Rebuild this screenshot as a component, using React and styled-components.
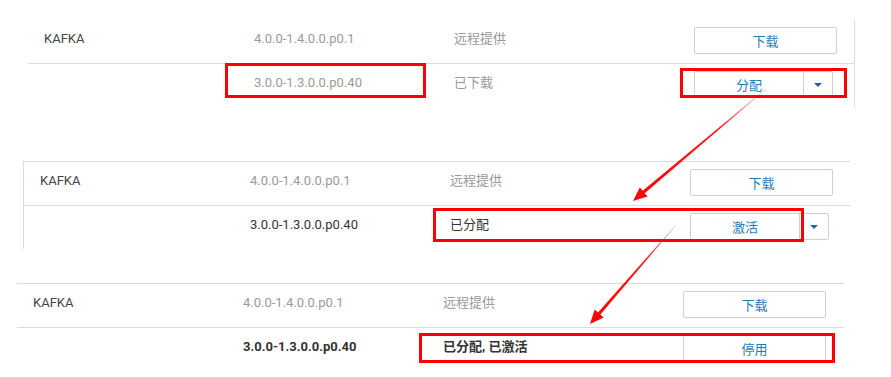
import React from "react";
import styled, { createGlobalStyle } from "styled-components";

const GlobalStyle = createGlobalStyle`
  body {
    margin: 0;
    background: #fff;
    font-family: Roboto, "Noto Sans CJK SC", sans-serif;
    font-size: 13px;
  }
`;

const steps = [
  {
    left: 28,
    top: 0,
    borderTop: false,
    borderLeft: false,
    borderRight: true,
    rows: [
      { name: "KAFKA", version: "4.0.0-1.4.0.0.p0.1", status: "远程提供", action: "下载", tone: "muted" },
      { name: "", version: "3.0.0-1.3.0.0.p0.40", status: "已下载", action: "分配", split: true, tone: "muted" },
    ],
  },
  {
    left: 23,
    top: 54,
    borderTop: true,
    borderLeft: true,
    borderRight: false,
    rows: [
      { name: "KAFKA", version: "4.0.0-1.4.0.0.p0.1", status: "远程提供", action: "下载", tone: "muted" },
      { name: "", version: "3.0.0-1.3.0.0.p0.40", status: "已分配", action: "激活", split: true, tone: "dark" },
    ],
  },
  {
    left: 17,
    top: 34,
    borderTop: true,
    borderLeft: false,
    borderRight: false,
    rows: [
      { name: "KAFKA", version: "4.0.0-1.4.0.0.p0.1", status: "远程提供", action: "下载", tone: "muted" },
      { name: "", version: "3.0.0-1.3.0.0.p0.40", status: "已分配, 已激活", action: "停用", tone: "bold" },
    ],
  },
];

const marks = [
  { x: 226.5, y: 64.5, w: 198, h: 32 },
  { x: 681.5, y: 69.5, w: 164, h: 27 },
  { x: 434.5, y: 209.5, w: 368, h: 31 },
  { x: 420.5, y: 334.5, w: 413, h: 27 },
];

const arrows = [
  { from: [766, 89], to: [633, 201] },
  { from: [676, 225], to: [590, 324] },
];

const Page = styled.div`
  position: relative;
  width: 891px;
  height: 377px;
  padding-top: 20px;
  box-sizing: border-box;
  overflow: hidden;
`;

const Panel = styled.div`
  margin-left: ${(p) => p.$left}px;
  margin-top: ${(p) => p.$top}px;
  width: 827px;
  box-sizing: border-box;
  border-top: ${(p) => (p.$borderTop ? "1px solid #dcdcdc" : "none")};
  border-left: ${(p) => (p.$borderLeft ? "1px solid #dcdcdc" : "none")};
  border-right: ${(p) => (p.$borderRight ? "1px solid #dcdcdc" : "none")};
`;

const Row = styled.div`
  display: grid;
  grid-template-columns: 210px 200px 240px 1fr;
  height: 43px;
  padding-left: 16px;
  border-bottom: 1px solid #dcdcdc;

  &:last-child {
    border-bottom: none;
  }
`;

const Cell = styled.div`
  padding-top: 10px;
  line-height: 17px;
  white-space: nowrap;
  color: ${(p) => (p.$tone === "muted" ? "#9a9a9a" : p.$tone === "name" ? "#444" : "#333")};
  font-weight: ${(p) => (p.$tone === "bold" ? 700 : 400)};
`;

const ActionCell = styled.div`
  padding-top: 7px;
  display: flex;
`;

const Button = styled.button`
  height: 27px;
  width: ${(p) => (p.$split ? "110px" : "143px")};
  padding: 0;
  background: #fff;
  border: 1px solid #cfcfcf;
  border-radius: ${(p) => (p.$split ? "2px 0 0 2px" : "2px")};
  color: #1f7db7;
  font-family: Roboto, "Noto Sans CJK SC", sans-serif;
  font-size: 13px;
  cursor: pointer;
`;

const CaretButton = styled.button`
  height: 27px;
  width: 30px;
  margin-left: -1px;
  padding: 0;
  background: #fff;
  border: 1px solid #cfcfcf;
  border-radius: 0 2px 2px 0;
  display: flex;
  align-items: center;
  justify-content: center;
  cursor: pointer;

  &::after {
    content: "";
    border-left: 4px solid transparent;
    border-right: 4px solid transparent;
    border-top: 4px solid #1c6aa3;
  }
`;

const Overlay = styled.svg`
  position: absolute;
  left: 0;
  top: 0;
  width: 891px;
  height: 377px;
  pointer-events: none;
`;

function arrowPoints(from, to) {
  const dx = to[0] - from[0];
  const dy = to[1] - from[1];
  const len = Math.hypot(dx, dy);
  const ux = dx / len;
  const uy = dy / len;
  const nx = -uy;
  const ny = ux;
  const head = 14;
  const bx = to[0] - ux * head;
  const by = to[1] - uy * head;
  const p = (x, y) => `${x.toFixed(1)},${y.toFixed(1)}`;
  return [
    p(from[0] + nx * 0.3, from[1] + ny * 0.3),
    p(bx + nx * 1.6, by + ny * 1.6),
    p(bx + nx * 6, by + ny * 6),
    p(to[0], to[1]),
    p(bx - nx * 6, by - ny * 6),
    p(bx - nx * 1.6, by - ny * 1.6),
    p(from[0] - nx * 0.3, from[1] - ny * 0.3),
  ].join(" ");
}

const Annotations = () => (
  <Overlay viewBox="0 0 891 377">
    <defs>
      {arrows.map((a, i) => (
        <linearGradient
          key={i}
          id={`fade${i}`}
          gradientUnits="userSpaceOnUse"
          x1={a.from[0]}
          y1={a.from[1]}
          x2={a.to[0]}
          y2={a.to[1]}
        >
          <stop offset="0" stopColor="#ff0000" stopOpacity="0.2" />
          <stop offset="0.35" stopColor="#ff0000" stopOpacity="0.9" />
          <stop offset="1" stopColor="#ff0000" />
        </linearGradient>
      ))}
    </defs>
    {marks.map((m, i) => (
      <rect key={i} x={m.x} y={m.y} width={m.w} height={m.h} fill="none" stroke="#f00" strokeWidth="3" />
    ))}
    {arrows.map((a, i) => (
      <polygon key={i} points={arrowPoints(a.from, a.to)} fill={`url(#fade${i})`} />
    ))}
  </Overlay>
);

const ParcelRow = ({ row }) => (
  <Row>
    <Cell $tone="name">{row.name}</Cell>
    <Cell $tone={row.tone === "muted" && row.name ? "muted" : row.tone}>{row.version}</Cell>
    <Cell $tone={row.tone}>{row.status}</Cell>
    <ActionCell>
      <Button $split={row.split}>{row.action}</Button>
      {row.split && <CaretButton aria-label="更多" />}
    </ActionCell>
  </Row>
);

export default function App() {
  return (
    <>
      <GlobalStyle />
      <Page>
        {steps.map((s, i) => (
          <Panel
            key={i}
            $left={s.left}
            $top={s.top}
            $borderTop={s.borderTop}
            $borderLeft={s.borderLeft}
            $borderRight={s.borderRight}
          >
            {s.rows.map((r, j) => (
              <ParcelRow key={j} row={r} />
            ))}
          </Panel>
        ))}
        <Annotations />
      </Page>
    </>
  );
}
